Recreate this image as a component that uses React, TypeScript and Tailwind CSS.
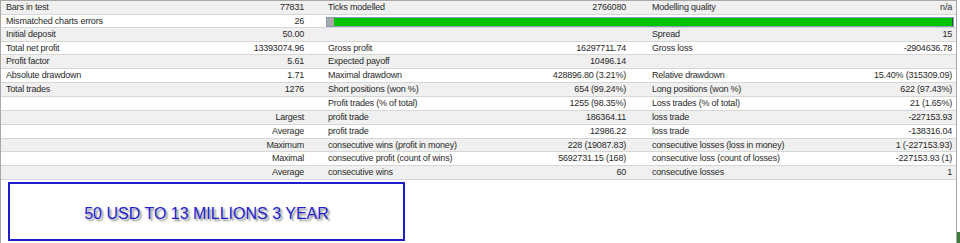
import React from "react"

type Cell = { label: string; value: string }

type Row = {
  h: string
  bg: string
  cols: [Cell, Cell | null, Cell]
}

const gray = "bg-[#f0f0f0]"
const white = "bg-white"

const rows: Row[] = [
  {
    h: "h-[14px]",
    bg: gray,
    cols: [
      { label: "Bars in test", value: "77831" },
      { label: "Ticks modelled", value: "2766080" },
      { label: "Modelling quality", value: "n/a" },
    ],
  },
  {
    h: "h-[13px]",
    bg: white,
    cols: [{ label: "Mismatched charts errors", value: "26" }, null, { label: "", value: "" }],
  },
  {
    h: "h-[14px]",
    bg: gray,
    cols: [
      { label: "Initial deposit", value: "50.00" },
      { label: "", value: "" },
      { label: "Spread", value: "15" },
    ],
  },
  {
    h: "h-[13px]",
    bg: white,
    cols: [
      { label: "Total net profit", value: "13393074.96" },
      { label: "Gross profit", value: "16297711.74" },
      { label: "Gross loss", value: "-2904636.78" },
    ],
  },
  {
    h: "h-[14px]",
    bg: gray,
    cols: [
      { label: "Profit factor", value: "5.61" },
      { label: "Expected payoff", value: "10496.14" },
      { label: "", value: "" },
    ],
  },
  {
    h: "h-[14px]",
    bg: white,
    cols: [
      { label: "Absolute drawdown", value: "1.71" },
      { label: "Maximal drawdown", value: "428896.80 (3.21%)" },
      { label: "Relative drawdown", value: "15.40% (315309.09)" },
    ],
  },
  {
    h: "h-[14px]",
    bg: gray,
    cols: [
      { label: "Total trades", value: "1276" },
      { label: "Short positions (won %)", value: "654 (99.24%)" },
      { label: "Long positions (won %)", value: "622 (97.43%)" },
    ],
  },
  {
    h: "h-[14px]",
    bg: white,
    cols: [
      { label: "", value: "" },
      { label: "Profit trades (% of total)", value: "1255 (98.35%)" },
      { label: "Loss trades (% of total)", value: "21 (1.65%)" },
    ],
  },
  {
    h: "h-[14px]",
    bg: gray,
    cols: [
      { label: "", value: "Largest" },
      { label: "profit trade", value: "186364.11" },
      { label: "loss trade", value: "-227153.93" },
    ],
  },
  {
    h: "h-[14px]",
    bg: white,
    cols: [
      { label: "", value: "Average" },
      { label: "profit trade", value: "12986.22" },
      { label: "loss trade", value: "-138316.04" },
    ],
  },
  {
    h: "h-[13px]",
    bg: gray,
    cols: [
      { label: "", value: "Maximum" },
      { label: "consecutive wins (profit in money)", value: "228 (19087.83)" },
      { label: "consecutive losses (loss in money)", value: "1 (-227153.93)" },
    ],
  },
  {
    h: "h-[14px]",
    bg: white,
    cols: [
      { label: "", value: "Maximal" },
      { label: "consecutive profit (count of wins)", value: "5692731.15 (168)" },
      { label: "consecutive loss (count of losses)", value: "-227153.93 (1)" },
    ],
  },
  {
    h: "h-[14px]",
    bg: gray,
    cols: [
      { label: "", value: "Average" },
      { label: "consecutive wins", value: "60" },
      { label: "consecutive losses", value: "1" },
    ],
  },
]

function QualityBar() {
  return (
    <div className="col-span-2 flex items-start pl-[3px] pr-[2px] pt-[2px]">
      <div className="flex h-[10px] flex-1 border border-[#8a9bb3]">
        <div className="w-[7px] bg-[#a9a9ad]" />
        <div className="flex-1 border-r border-[#1f5f1f] bg-[#00c400]" />
      </div>
    </div>
  )
}

export default function App() {
  return (
    <div className="flex h-[243px] w-[960px] overflow-hidden bg-white font-['Liberation_Sans',Arial,sans-serif] text-[9px] tracking-[-0.2px] text-[#2a2a2a]">
      <div className="flex w-[957px] flex-col border-t border-r border-l border-[#a8a8a8]">
        {rows.map((row, i) => (
          <div
            key={i}
            className={`grid grid-cols-[322px_324px_309px] border-b border-[#d6d6d6] ${row.h} ${row.bg}`}
          >
            <div className="flex items-center justify-between pr-[19px] pl-[5px]">
              <span>{row.cols[0].label}</span>
              <span>{row.cols[0].value}</span>
            </div>
            {row.cols[1] ? (
              <>
                <div className="flex items-center justify-between pr-[21px] pl-[5px]">
                  <span>{row.cols[1].label}</span>
                  <span>{row.cols[1].value}</span>
                </div>
                <div className="flex items-center justify-between pr-[4px] pl-[5px]">
                  <span>{row.cols[2].label}</span>
                  <span>{row.cols[2].value}</span>
                </div>
              </>
            ) : (
              <QualityBar />
            )}
          </div>
        ))}

        <div className="flex-1 pt-[2px] pl-[7px]">
          <div className="flex h-[59px] w-[397px] items-center justify-center border-2 border-[#1d1dcc] pt-[4px]">
            <span className="text-[16px] tracking-normal text-[#2222d0] [text-shadow:2px_2px_2px_#8a8a8a]">
              50 USD TO 13 MILLIONS 3 YEAR
            </span>
          </div>
        </div>
      </div>
      <div className="flex w-[3px] flex-col justify-end">
        <div className="h-[11px] bg-[#3d7a3d]" />
      </div>
    </div>
  )
}
